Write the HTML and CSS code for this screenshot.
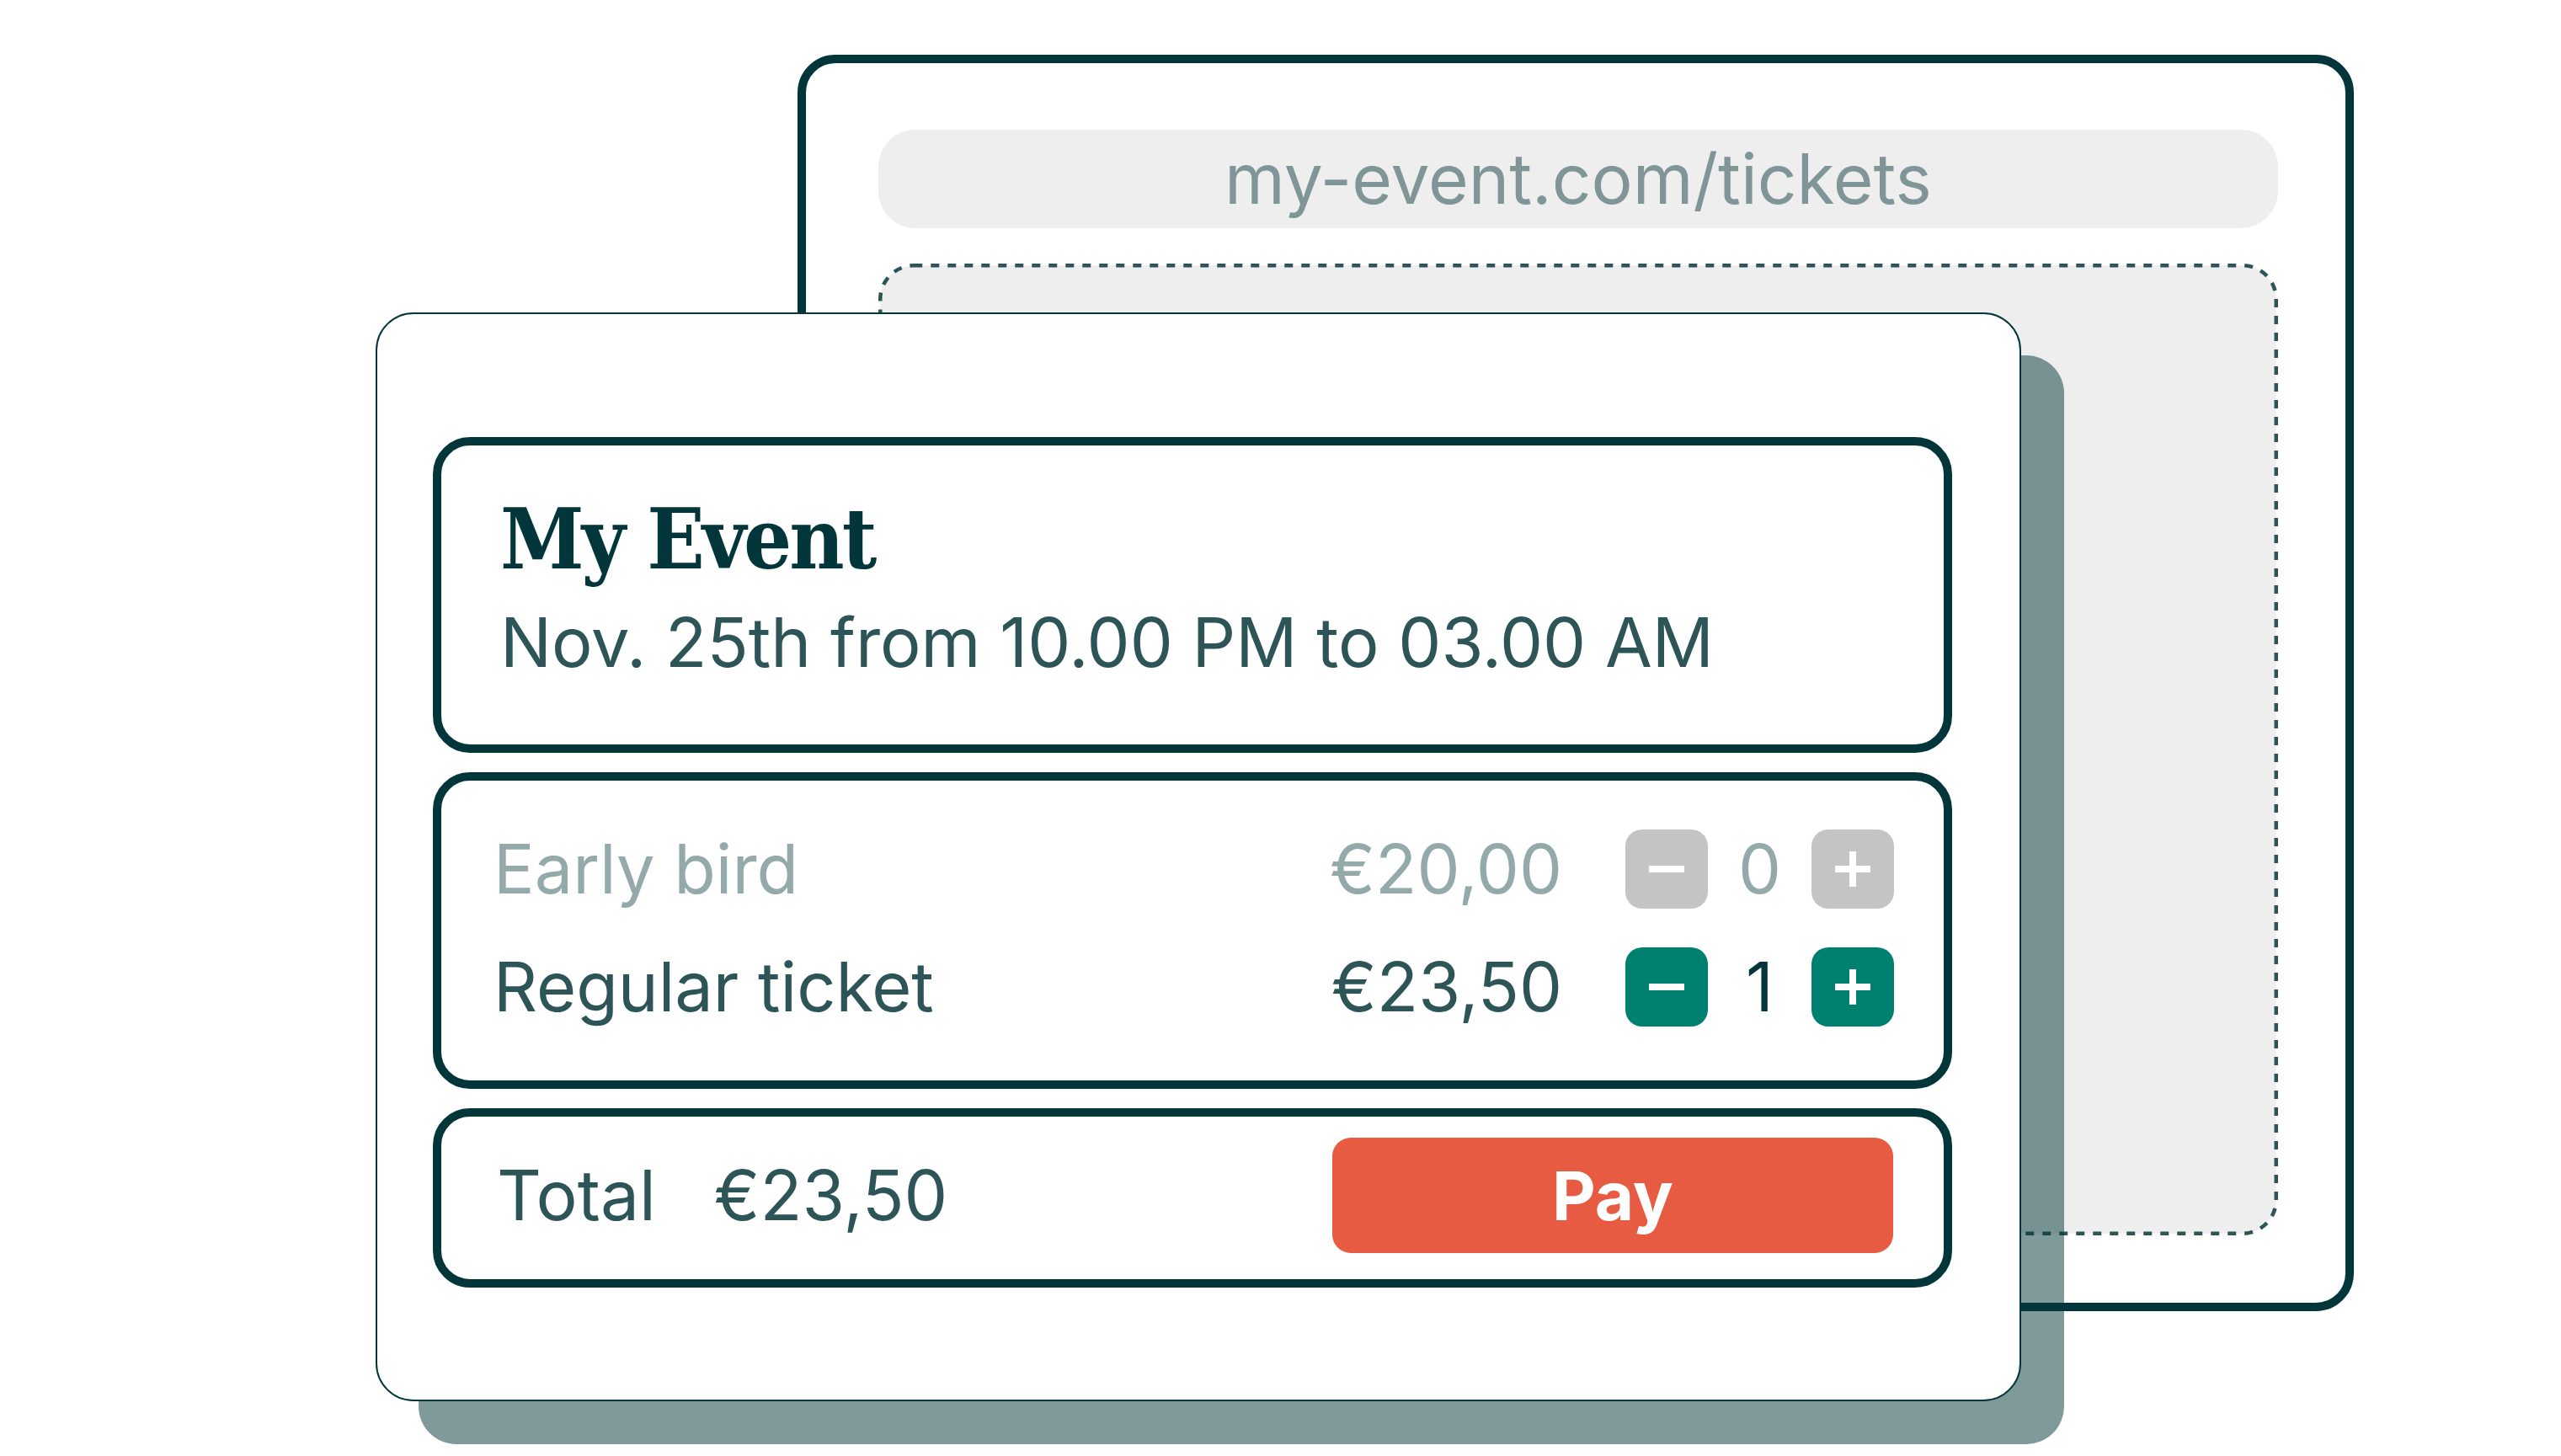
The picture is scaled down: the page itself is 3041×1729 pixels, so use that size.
FILE: index.html
```html
<!DOCTYPE html>
<html lang="en">
<head>
<meta charset="utf-8">
<title>My Event – tickets</title>
<link rel="stylesheet" href="styles.css">
</head>
<body>
<div class="stage">
  <div class="browser">
    <div class="urlbar">my-event.com/tickets</div>
    <div class="embed">
      <svg class="embed-frame" width="1662" height="1154" viewBox="0 0 1662 1154" aria-hidden="true">
        <rect x="2.25" y="2.25" width="1657.5" height="1149.5" rx="40" ry="40" fill="#eeeeee" stroke="#2d5457" stroke-width="4.5" stroke-dasharray="10 10"/>
      </svg>
    </div>
  </div>

  <div class="card">
    <section class="box event">
      <h1 class="title">My Event</h1>
      <p class="date">Nov. 25th from 10.00 PM to 03.00 AM</p>
    </section>

    <section class="box tickets">
      <div class="row muted">
        <span class="name">Early bird</span>
        <span class="price">€20,00</span>
        <div class="stepper">
          <button class="step off" aria-label="Remove"><svg width="42" height="42" viewBox="0 0 42 42"><path d="M0 21h42" stroke="#fff" stroke-width="8"/></svg></button>
          <span class="count">0</span>
          <button class="step off" aria-label="Add"><svg width="42" height="42" viewBox="0 0 42 42"><path d="M0 21h42M21 0v42" stroke="#fff" stroke-width="8"/></svg></button>
        </div>
      </div>
      <div class="row">
        <span class="name">Regular ticket</span>
        <span class="price">€23,50</span>
        <div class="stepper">
          <button class="step on" aria-label="Remove"><svg width="42" height="42" viewBox="0 0 42 42"><path d="M0 21h42" stroke="#fff" stroke-width="8"/></svg></button>
          <span class="count active">1</span>
          <button class="step on" aria-label="Add"><svg width="42" height="42" viewBox="0 0 42 42"><path d="M0 21h42M21 0v42" stroke="#fff" stroke-width="8"/></svg></button>
        </div>
      </div>
    </section>

    <section class="box total">
      <span class="total-label">Total</span>
      <span class="total-amount">€23,50</span>
      <button class="pay">Pay</button>
    </section>
  </div>
</div>
</body>
</html>
```

FILE: styles.css
```css
* { box-sizing: border-box; }

html, body {
  margin: 0;
  padding: 0;
  background: #ffffff;
}

body {
  font-family: Inter, "Noto Sans", "Liberation Sans", sans-serif;
  color: #2d5457;
}

.stage {
  position: relative;
  width: 3041px;
  height: 1729px;
  overflow: hidden;
  background: #ffffff;
}

/* back browser window */
.browser {
  position: absolute;
  left: 947px;
  top: 65px;
  width: 1848px;
  height: 1492px;
  border: 10px solid #02363a;
  border-radius: 45px;
  background: #ffffff;
  padding: 79px 80px 80px 86px;
  display: flex;
  flex-direction: column;
  gap: 42px;
}

.urlbar {
  height: 117px;
  flex: none;
  border-radius: 44px;
  background: #eeeeee;
  color: #7f9597;
  font-size: 82px;
  line-height: 117px;
  text-align: center;
}

.embed {
  height: 1154px;
  flex: none;
}

.embed-frame {
  display: block;
}

/* front ticket card */
.card {
  position: absolute;
  left: 446px;
  top: 371px;
  width: 1954px;
  height: 1293px;
  border: 2px solid #02363a;
  border-radius: 45px;
  background: #ffffff;
  box-shadow: 51px 51px 0 0 rgba(2, 54, 58, 0.5);
  padding: 146px 80px 0 66px;
  display: flex;
  flex-direction: column;
  gap: 23px;
}

.box {
  border: 10px solid #02363a;
  border-radius: 44px;
  flex: none;
}

.event {
  height: 375px;
  padding: 61px 0 0 70px;
}

.title {
  margin: 0;
  font-family: "DejaVu Serif", "Liberation Serif", serif;
  font-stretch: condensed;
  font-weight: 700;
  font-size: 100px;
  line-height: 100px;
  color: #02363a;
  letter-spacing: -3px;
}

.date {
  margin: 23px 0 0;
  font-size: 81px;
  line-height: 100px;
  color: #2d5457;
}

.tickets {
  height: 376px;
  padding: 58px 59px 0 62px;
  display: flex;
  flex-direction: column;
  gap: 46px;
}

.row {
  display: flex;
  align-items: center;
  height: 94px;
  font-size: 81px;
  line-height: 94px;
  color: #2d5457;
}

.row.muted {
  color: #94a9aa;
}

.name {
  flex: 1;
}

.price {
  margin-right: 75px;
}

.stepper {
  display: flex;
  align-items: center;
}

.step {
  width: 98px;
  height: 94px;
  border: none;
  border-radius: 20px;
  padding: 0;
  display: grid;
  place-items: center;
}

.step svg {
  display: block;
}

.step.off { background: #c4c4c4; }
.step.on { background: #00806e; }

.count {
  width: 123px;
  text-align: center;
}

.count.active {
  color: #02363a;
}

.total {
  height: 213px;
  padding: 0 60px 6px 66px;
  display: flex;
  align-items: center;
  font-size: 82px;
  color: #2d5457;
}

.total-amount {
  margin-left: 69px;
}

.pay {
  margin-left: auto;
  width: 666px;
  height: 137px;
  border: none;
  border-radius: 22px;
  background: #e65b41;
  color: #ffffff;
  font-family: Inter, "Noto Sans", "Liberation Sans", sans-serif;
  font-weight: 700;
  font-size: 80px;
  line-height: 137px;
  padding: 0;
}
```
